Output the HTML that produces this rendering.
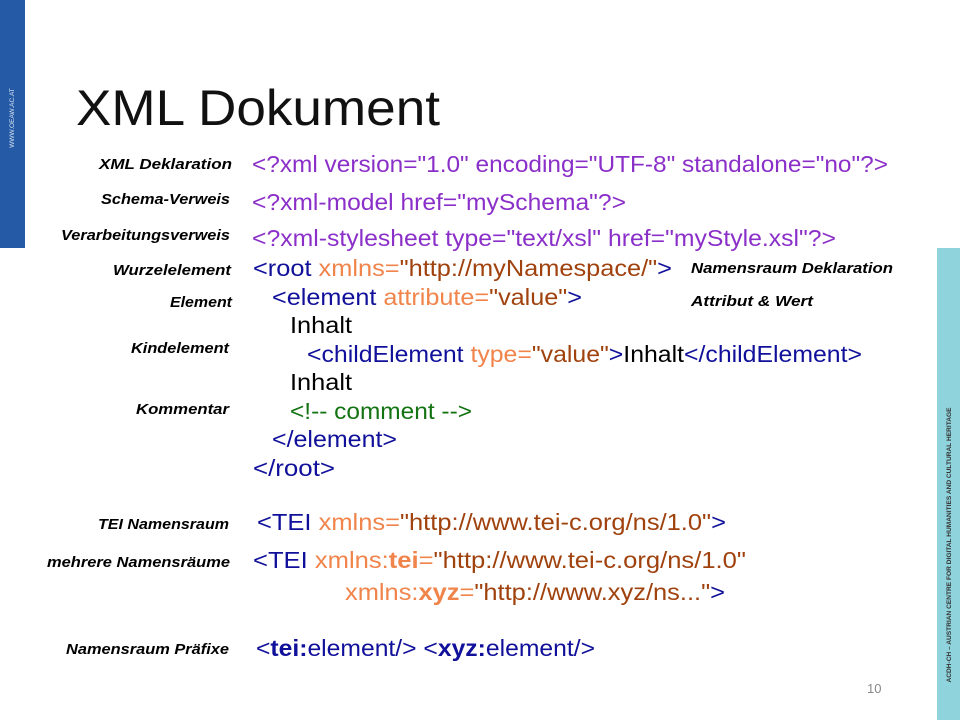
<!DOCTYPE html>
<html><head><meta charset="utf-8"><style>
html,body{margin:0;padding:0;background:#fff;width:960px;height:720px;overflow:hidden}
svg{display:block}
.c{font-family:"Liberation Sans",sans-serif;font-size:23px}
.l{font-family:"Liberation Sans",sans-serif;font-size:15px;font-weight:bold;font-style:italic;fill:#000}
.p{fill:#8b2fc9}.b{fill:#10109a}.o{fill:#f0844a}.r{fill:#a0420e}.g{fill:#137313}.k{fill:#000}
</style></head><body>
<svg width="960" height="720" xmlns="http://www.w3.org/2000/svg">
<rect x="0" y="0" width="25" height="248" fill="#245aa6"/>
<text transform="translate(14,118) rotate(-90)" font-family="Liberation Sans,sans-serif" font-size="6.5" fill="#dfe8f5" text-anchor="middle">WWW.OEAW.AC.AT</text>
<rect x="937" y="248" width="23" height="472" fill="#8fd4dc"/>
<text transform="translate(951,545) rotate(-90)" font-family="Liberation Sans,sans-serif" font-size="6" font-weight="bold" fill="#333" text-anchor="middle" textLength="275" lengthAdjust="spacingAndGlyphs">ACDH-CH – AUSTRIAN CENTRE FOR DIGITAL HUMANITIES AND CULTURAL HERITAGE</text>
<text x="76" y="125" font-family="Liberation Sans,sans-serif" font-size="50" fill="#111" textLength="364" lengthAdjust="spacingAndGlyphs">XML Dokument</text>

<text class="l" x="99" y="169" textLength="133" lengthAdjust="spacingAndGlyphs">XML Deklaration</text>
<text class="l" x="101" y="204" textLength="129" lengthAdjust="spacingAndGlyphs">Schema-Verweis</text>
<text class="l" x="61" y="240" textLength="169" lengthAdjust="spacingAndGlyphs">Verarbeitungsverweis</text>
<text class="l" x="113" y="275" textLength="118" lengthAdjust="spacingAndGlyphs">Wurzelelement</text>
<text class="l" x="170" y="307" textLength="62" lengthAdjust="spacingAndGlyphs">Element</text>
<text class="l" x="131" y="353" textLength="98" lengthAdjust="spacingAndGlyphs">Kindelement</text>
<text class="l" x="136" y="414" textLength="93" lengthAdjust="spacingAndGlyphs">Kommentar</text>
<text class="l" x="98" y="529" textLength="131" lengthAdjust="spacingAndGlyphs">TEI Namensraum</text>
<text class="l" x="47" y="567" textLength="183" lengthAdjust="spacingAndGlyphs">mehrere Namensräume</text>
<text class="l" x="66" y="654" textLength="163" lengthAdjust="spacingAndGlyphs">Namensraum Präfixe</text>
<text class="l" x="691" y="273" textLength="202" lengthAdjust="spacingAndGlyphs">Namensraum Deklaration</text>
<text class="l" x="691" y="306" textLength="122" lengthAdjust="spacingAndGlyphs">Attribut &amp; Wert</text>

<text class="c p" x="252" y="172" textLength="636" lengthAdjust="spacingAndGlyphs">&lt;?xml version="1.0" encoding="UTF-8" standalone="no"?&gt;</text>
<text class="c p" x="252" y="210" textLength="374" lengthAdjust="spacingAndGlyphs">&lt;?xml-model href="mySchema"?&gt;</text>
<text class="c p" x="252" y="246" textLength="584" lengthAdjust="spacingAndGlyphs">&lt;?xml-stylesheet type="text/xsl" href="myStyle.xsl"?&gt;</text>
<text class="c" x="253" y="276" textLength="419" lengthAdjust="spacingAndGlyphs"><tspan class="b">&lt;root </tspan><tspan class="o">xmlns=</tspan><tspan class="r">"http://myNamespace/"</tspan><tspan class="b">&gt;</tspan></text>
<text class="c" x="272" y="305" textLength="310" lengthAdjust="spacingAndGlyphs"><tspan class="b">&lt;element </tspan><tspan class="o">attribute=</tspan><tspan class="r">"value"</tspan><tspan class="b">&gt;</tspan></text>
<text class="c k" x="290" y="333" textLength="62" lengthAdjust="spacingAndGlyphs">Inhalt</text>
<text class="c" x="307" y="362" textLength="555" lengthAdjust="spacingAndGlyphs"><tspan class="b">&lt;childElement </tspan><tspan class="o">type=</tspan><tspan class="r">"value"</tspan><tspan class="b">&gt;</tspan><tspan class="k">Inhalt</tspan><tspan class="b">&lt;/childElement&gt;</tspan></text>
<text class="c k" x="290" y="390" textLength="62" lengthAdjust="spacingAndGlyphs">Inhalt</text>
<text class="c g" x="290" y="419" textLength="182" lengthAdjust="spacingAndGlyphs">&lt;!-- comment --&gt;</text>
<text class="c b" x="272" y="447" textLength="125" lengthAdjust="spacingAndGlyphs">&lt;/element&gt;</text>
<text class="c b" x="253" y="476" textLength="82" lengthAdjust="spacingAndGlyphs">&lt;/root&gt;</text>

<text class="c" x="257" y="530" textLength="469" lengthAdjust="spacingAndGlyphs"><tspan class="b">&lt;TEI </tspan><tspan class="o">xmlns=</tspan><tspan class="r">"http://www.tei-c.org/ns/1.0"</tspan><tspan class="b">&gt;</tspan></text>
<text class="c" x="253" y="568" textLength="493" lengthAdjust="spacingAndGlyphs"><tspan class="b">&lt;TEI </tspan><tspan class="o">xmlns:</tspan><tspan class="o" font-weight="bold">tei</tspan><tspan class="o">=</tspan><tspan class="r">"http://www.tei-c.org/ns/1.0"</tspan></text>
<text class="c" x="345" y="600" textLength="380" lengthAdjust="spacingAndGlyphs"><tspan class="o">xmlns:</tspan><tspan class="o" font-weight="bold">xyz</tspan><tspan class="o">=</tspan><tspan class="r">"http://www.xyz/ns..."</tspan><tspan class="b">&gt;</tspan></text>
<text class="c b" x="256" y="656" textLength="339" lengthAdjust="spacingAndGlyphs">&lt;<tspan font-weight="bold">tei:</tspan>element/&gt; &lt;<tspan font-weight="bold">xyz:</tspan>element/&gt;</text>

<text x="867" y="693" font-family="Liberation Sans,sans-serif" font-size="13" fill="#888">10</text>
</svg>
</body></html>
